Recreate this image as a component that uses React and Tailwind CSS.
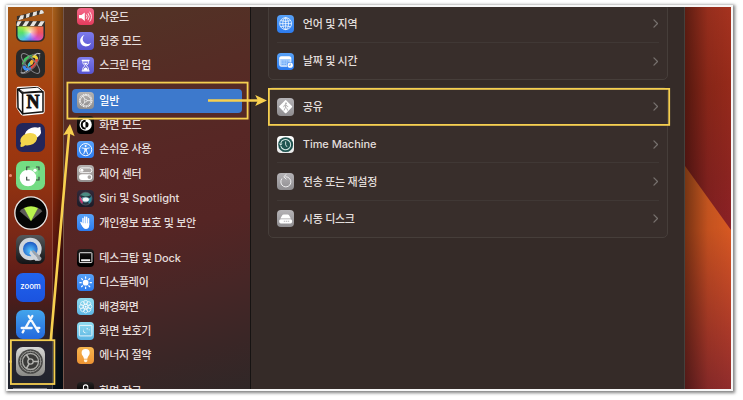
import React from "react";

const TICKS = [0, 45, 90, 135, 180, 225, 270, 315];
const TEETH = Array.from({ length: 24 }, (_, i) => i * 15);

const icons = {
  sound: (
    <>
      <path d="M6 21h7l10-8v25l-10-8H6z" fill="#fff" />
      <path
        d="M28 20q4 5.500 0 11M33 16q7 9.500 0 19M38 12q10 13.500 0 27"
        fill="none"
        stroke="#fff"
        strokeWidth="2.500"
        strokeLinecap="round"
      />
    </>
  ),
  focus: (
    <path d="M22 9a17 17 0 1 0 20 23A15 15 0 0 1 22 9z" fill="#fff" />
  ),
  screenTime: (
    <>
      <path d="M14 8h23v4H14zM14 39h23v4H14z" fill="#fff" />
      <path
        d="M17 12v4q0 5 7 9.500-7 4.500-7 9.500v4h17v-4q0-5-7-9.500 7-4.500 7-9.500v-4z"
        fill="none"
        stroke="#fff"
        strokeWidth="2.500"
      />
      <path d="M20 17h11l-5.500 7zM19 38q1-6 6.500-8 5.500 2 6.500 8z" fill="#fff" />
    </>
  ),
  general: (
    <g fill="none" stroke="#fff">
      <circle cx="25.500" cy="25.500" r="18.500" strokeWidth="3" strokeDasharray="2.900 1.940" />
      <circle cx="25.500" cy="25.500" r="15.500" strokeWidth="2" />
      <circle cx="25.500" cy="25.500" r="4" strokeWidth="2" />
      <path d="M29.500 25.500H40M23.500 22l-6-10M23.500 29l-6 10" strokeWidth="2.200" />
    </g>
  ),
  appearance: (
    <>
      <circle cx="25.500" cy="25.500" r="18" fill="#fff" />
      <path d="M25.500 11a14.500 14.500 0 0 0 0 29z" fill="#050505" />
      <path d="M25.500 17a8.500 8.500 0 0 0 0 17z" fill="#fff" />
      <path d="M25.500 17a8.500 8.500 0 0 1 0 17z" fill="#050505" />
    </>
  ),
  accessibility: (
    <>
      <circle cx="25.500" cy="25.500" r="18" fill="none" stroke="#fff" strokeWidth="2.800" />
      <circle cx="25.500" cy="15" r="3" fill="#fff" />
      <path
        d="M15 20.500l8 1.500v7l-3 9M36 20.500l-8 1.500v7l3 9M25.500 21v9"
        fill="none"
        stroke="#fff"
        strokeWidth="2.800"
        strokeLinecap="round"
      />
    </>
  ),
  controlCenter: (
    <>
      <rect x="7" y="8.500" width="37" height="14" rx="7" fill="none" stroke="#fff" strokeWidth="2.600" />
      <circle cx="14.500" cy="15.500" r="4.500" fill="#fff" />
      <rect x="6" y="27" width="39" height="17" rx="8.500" fill="#fff" />
      <circle cx="36.500" cy="35.500" r="5.500" fill="#a9a6a5" />
    </>
  ),
  siri: (
    <>
      <circle cx="25.500" cy="25.500" r="19" fill="#23343f" />
      <path d="M10 15a19 19 0 0 1 31 0q-13 8-31 0z" fill="#4b8b83" />
      <path d="M8 18q-4 15 8 23 5-12-8-23z" fill="#c9366f" />
      <path d="M43 18q3 16-8 23-6-10 8-23z" fill="#2b8796" />
      <path d="M12 24q12-9 27 1-6 13-15 12-8-1-12-13z" fill="#71b7c2" opacity=".75" />
      <ellipse cx="26" cy="28" rx="9" ry="6" fill="#f3f8fb" />
      <circle cx="25.500" cy="25.500" r="19" fill="none" stroke="#6a6f78" strokeWidth="1.500" />
    </>
  ),
  privacy: (
    <>
      <g stroke="#fff" strokeWidth="4.200" strokeLinecap="round" fill="none">
        <path d="M17.500 13v18M23 9v20M28.500 9.500V30M34 14v18" />
        <path d="M11.500 25l6 10" />
      </g>
      <path d="M15.500 27H36v6q0 11-10 11-6 0-9-6-3-4-5-9z" fill="#fff" />
    </>
  ),
  desktop: (
    <>
      <rect x="7" y="11" width="37" height="29" rx="2" fill="none" stroke="#f4f4f4" strokeWidth="2.800" />
      <rect x="12" y="30" width="27" height="6" rx="1" fill="#f4f4f4" />
    </>
  ),
  display: (
    <>
      <circle cx="25.500" cy="25.500" r="8.500" fill="#fff" />
      {TICKS.map((a) => (
        <path
          key={a}
          d="M25.500 12.500v-4"
          stroke="#fff"
          strokeWidth="3.400"
          strokeLinecap="round"
          transform={`rotate(${a} 25.500 25.500)`}
        />
      ))}
    </>
  ),
  wallpaper: (
    <>
      {TICKS.map((a) => (
        <circle
          key={a}
          cx="25.500"
          cy="13"
          r="6"
          fill="none"
          stroke="#fff"
          strokeWidth="2"
          transform={`rotate(${a} 25.500 25.500)`}
        />
      ))}
      <circle cx="25.500" cy="25.500" r="7" fill="none" stroke="#fff" strokeWidth="2" />
      <circle cx="25.500" cy="25.500" r="3" fill="#fff" />
    </>
  ),
  screenSaver: (
    <>
      <rect x="7" y="10" width="37" height="31" rx="2" fill="none" stroke="#fff" strokeWidth="2.400" />
      <path d="M22 18a8 8 0 1 0 10 12 7.500 7.500 0 0 1-10-12z" fill="#fff" />
      <circle cx="30" cy="20" r="2" fill="#fff" />
      <circle cx="36" cy="23" r="1.500" fill="#fff" />
    </>
  ),
  energy: (
    <>
      <path d="M25.500 6a12 12 0 0 0-12 12c0 7 6 9 7 17h10c1-8 7-10 7-17a12 12 0 0 0-12-12z" fill="#fff" />
      <path d="M20.500 37h10v4q-2 4-5 4t-5-4z" fill="#fff3dc" />
    </>
  ),
  lock: (
    <>
      <rect x="15" y="20" width="21" height="18" rx="3" fill="#fff" />
      <path d="M19 21v-6a6.500 6.500 0 0 1 13 0v6" fill="none" stroke="#fff" strokeWidth="3" />
    </>
  ),
  globe: (
    <g fill="none" stroke="#fff" strokeWidth="2.200">
      <circle cx="25.500" cy="25.500" r="17.500" />
      <ellipse cx="25.500" cy="25.500" rx="8.500" ry="17.500" />
      <path d="M25.500 8v35M8 25.500h35M11 16.500q14.500 5 29 0M11 34.500q14.500-5 29 0" />
    </g>
  ),
  date: (
    <>
      <rect x="8" y="11" width="33" height="28" rx="4" fill="#a9cffd" stroke="#fff" strokeWidth="2.500" />
      <path d="M8 18v-3q0-4 4-4h25q4 0 4 4v3z" fill="#fff" />
      <path d="M14 24h21M14 29h18M14 34h14" stroke="#4d96f5" strokeWidth="2.200" strokeDasharray="3 2" />
      <circle cx="39" cy="36" r="9.500" fill="#3a86f0" />
      <circle cx="39" cy="36" r="7.800" fill="#fff" />
      <path d="M39 31v5.500h-4" fill="none" stroke="#3a86f0" strokeWidth="1.800" />
    </>
  ),
  sharing: (
    <>
      <rect x="11" y="11" width="29" height="29" rx="3" fill="#fff" transform="rotate(45 25.500 25.500)" />
      <circle cx="26.500" cy="15.500" r="2.200" fill="#8b898b" />
      <path
        d="M26 20l-1 8-4 8M25.500 27l4 4 1.500 5M20 26l1.500-4.500 4.500-1.500 3 4 3 1"
        fill="none"
        stroke="#8b898b"
        strokeWidth="1.800"
        strokeLinecap="round"
        strokeLinejoin="round"
      />
    </>
  ),
  timeMachine: (
    <>
      <circle cx="25.500" cy="25.500" r="22" fill="#1f5450" />
      <path d="M11 30a15 15 0 1 0 0-9" fill="none" stroke="#d7e9e6" strokeWidth="3" />
      <path d="M5.500 22h11l-5.500 7z" fill="#d7e9e6" />
      <path d="M25.500 16v10l4 6" fill="none" stroke="#e9f4f2" strokeWidth="2.600" />
    </>
  ),
  reset: (
    <>
      <path d="M14 17a15 15 0 1 0 12-6" fill="none" stroke="#f3f2f3" strokeWidth="2.800" strokeLinecap="round" />
      <path
        d="M27 4.500l-7 6.500 7 7"
        fill="none"
        stroke="#f3f2f3"
        strokeWidth="2.800"
        strokeLinecap="round"
        strokeLinejoin="round"
      />
    </>
  ),
  disk: (
    <>
      <path d="M10 25l5-9q1.500-3 5-3h11q3.500 0 5 3l5 9z" fill="#fff" />
      <rect x="6.500" y="27" width="38" height="12.500" rx="5" fill="#fff" />
      <path d="M20 33h16" stroke="#b4b2b5" strokeWidth="3" strokeDasharray="4 2" />
    </>
  ),
};

const tones = {
  sound: "from-[#f4688a] to-[#e33b5d]",
  focus: "from-[#7e7bec] to-[#5854d0]",
  screenTime: "from-[#7e7bec] to-[#5854d0]",
  general: "from-[#b5b3b2] to-[#8f8d8d]",
  appearance: "from-[#1c1c1c] to-[#000000]",
  accessibility: "from-[#58a2f8] to-[#2c7bee]",
  controlCenter: "from-[#b5b1b0] to-[#918d8c]",
  siri: "from-[#33293a] to-[#1b1c27]",
  privacy: "from-[#58a2f8] to-[#2c7bee]",
  desktop: "from-[#222020] to-[#000000]",
  display: "from-[#58a2f8] to-[#2c7bee]",
  wallpaper: "from-[#8fdcef] to-[#5cb5e3]",
  screenSaver: "from-[#8fdcef] to-[#5cb5e3]",
  energy: "from-[#f6b54e] to-[#ed9333]",
  lock: "from-[#282424] to-[#000000]",
  globe: "from-[#58a2f8] to-[#2c7bee]",
  date: "from-[#58a2f8] to-[#2c7bee]",
  sharing: "from-[#b5b3b6] to-[#8f8d90]",
  timeMachine: "from-[#ffffff] to-[#e9e9e9]",
  reset: "from-[#b5b3b6] to-[#8f8d90]",
  disk: "from-[#b5b3b6] to-[#8f8d90]",
};

const sidebar = [
  [
    { id: "sound", label: "사운드" },
    { id: "focus", label: "집중 모드" },
    { id: "screenTime", label: "스크린 타임" },
  ],
  [
    { id: "general", label: "일반", active: true },
    { id: "appearance", label: "화면 모드" },
    { id: "accessibility", label: "손쉬운 사용" },
    { id: "controlCenter", label: "제어 센터" },
    { id: "siri", label: "Siri 및 Spotlight", tracking: "tracking-normal" },
    { id: "privacy", label: "개인정보 보호 및 보안" },
  ],
  [
    { id: "desktop", label: "데스크탑 및 Dock", tracking: "tracking-[-0.2px]" },
    { id: "display", label: "디스플레이" },
    { id: "wallpaper", label: "배경화면" },
    { id: "screenSaver", label: "화면 보호기" },
    { id: "energy", label: "에너지 절약" },
  ],
  [{ id: "lock", label: "화면 잠금" }],
];

const regionRows = [
  { id: "globe", label: "언어 및 지역" },
  { id: "date", label: "날짜 및 시간" },
];

const systemRows = [
  { id: "sharing", label: "공유" },
  { id: "timeMachine", label: "Time Machine", tracking: "tracking-[-0.05px]" },
  { id: "reset", label: "전송 또는 재설정" },
  { id: "disk", label: "시동 디스크" },
];

function SettingIcon({ id }) {
  return (
    <span className={`block size-[17.300px] shrink-0 overflow-hidden rounded-[4px] bg-linear-to-b ${tones[id]}`}>
      <svg viewBox="0 0 51 51" className="block size-full">
        {icons[id]}
      </svg>
    </span>
  );
}

function SidebarItem({ id, label, active, tracking = "tracking-[-0.28px]" }) {
  return (
    <div
      className={`flex h-[24.350px] shrink-0 items-center gap-[5px] rounded-[4px] pl-[5px] whitespace-nowrap ${
        active ? "bg-[#3d79cc] text-white" : "text-[#e6dddb]"
      }`}
    >
      <SettingIcon id={id} />
      <span className={`pt-px ${tracking}`}>{label}</span>
    </div>
  );
}

function Row({ id, label, divided, tracking = "tracking-[-0.28px]" }) {
  return (
    <div
      className={`mx-2 flex h-[37.300px] shrink-0 items-center border-t ${
        divided ? "border-[#403835]" : "border-transparent"
      }`}
    >
      <SettingIcon id={id} />
      <span className={`ml-[8.500px] pt-px text-[#e3dedc] ${tracking}`}>{label}</span>
      <svg viewBox="0 0 6 10" className="mr-px ml-auto h-[9px] w-[5.500px]">
        <path
          d="M1 1l4 4-4 4"
          fill="none"
          stroke="#77716e"
          strokeWidth="1.400"
          strokeLinecap="round"
          strokeLinejoin="round"
        />
      </svg>
    </div>
  );
}

function FinalCut() {
  return (
    <svg viewBox="0 0 87 96" className="h-8 w-[29px]">
      <defs>
        <clipPath id="fc-body">
          <path d="M2 38h83v38q0 18-18 18H20Q2 94 2 76z" />
        </clipPath>
        <clipPath id="fc-top">
          <path d="M2 19L76 0q6 0 8 10L2 32z" />
        </clipPath>
      </defs>
      <path d="M0 34h87v42q0 20-20 20H20Q0 96 0 76z" fill="#2d2b2b" />
      <g clipPath="url(#fc-top)">
        <path d="M0 0h87v34H0z" fill="#38332f" />
        <path d="M6 32l8-16h10l-3 12zM30 24l1-13 11-3-3 14zM49 20l3-14 11-3-1 13zM69 14l4-14h12v11z" fill="#e7e4df" />
      </g>
      <path d="M0 34h87v15H0z" fill="#35312e" />
      <path d="M5 34h12l-9 14H2v-6zM28 34h12l-9 14H19zM51 34h12l-9 14H42zM74 34h12l-9 14H65z" fill="#e7e4df" />
      <g clipPath="url(#fc-body)">
        <foreignObject x="4" y="49" width="79" height="43">
          <div className="size-full rounded-b-[16px] bg-[conic-gradient(from_0deg_at_50%_45%,#f0a83c,#f07a42,#ef5364,#d04fd0,#6d6df2,#4fc3e8,#55e06d,#c5e83e,#f0a83c)]">
            <div className="size-full bg-[radial-gradient(circle_at_50%_40%,rgba(255,255,255,.7),rgba(255,255,255,0)_50%)]" />
          </div>
        </foreignObject>
      </g>
    </svg>
  );
}

function Motion() {
  return (
    <svg viewBox="0 0 87 87" className="size-[29px]">
      <rect width="87" height="87" rx="20" fill="#292929" />
      <g fill="none" strokeWidth="9">
        <path d="M22 47Q25 25 50 21" stroke="#42c763" />
        <path d="M49 21q14 0 13 11" stroke="#f0d637" />
        <path d="M62 31q0 19-18 27" stroke="#ee473d" />
        <path d="M45 58q-20 9-21-8" stroke="#3b8cf4" />
      </g>
      <path d="M37 44l9-12 8 3-4 11-10 5z" fill="#f2b735" />
      <path d="M35 47l6-9 3 10-8 7z" fill="#3fc9da" />
      <g fill="none" strokeWidth="3">
        <ellipse cx="43.500" cy="43.500" rx="38" ry="14" stroke="#85868b" transform="rotate(48 43.500 43.500)" />
        <ellipse cx="43.500" cy="43.500" rx="38" ry="15" stroke="#65666c" transform="rotate(-48 43.500 43.500)" />
        <path d="M14 71q6 4 22-7M73 14q-8-4-19 5" stroke="#c2c4c9" strokeWidth="3" />
      </g>
    </svg>
  );
}

function Notion() {
  return (
    <svg viewBox="0 0 87 90" className="h-[30px] w-[29px]">
      <path d="M2 6q0-4 6-4L62 0q4 0 7 2l14 11q3 3 3 7v55q0 8-8 9l-55 5q-6 0-9-4L4 70q-3-4-3-8z" fill="#fff" />
      <path d="M7 8l54-4q4 0 7 2l11 9-54 4q-4 0-6-2z" fill="#fff" stroke="#111" strokeWidth="3" />
      <path d="M5 9l15 14v60L6 66z" fill="#fff" stroke="#111" strokeWidth="4.500" strokeLinejoin="round" />
      <path d="M20 21l61-4v60l-61 6z" fill="#fff" stroke="#111" strokeWidth="4.500" strokeLinejoin="round" />
      <text
        x="51"
        y="67"
        textAnchor="middle"
        fontFamily="Liberation Serif, serif"
        fontWeight="700"
        fontSize="54"
        fill="#111"
        stroke="#111"
        strokeWidth="2.500"
      >
        N
      </text>
    </svg>
  );
}

function LemonApp() {
  return (
    <svg viewBox="0 0 87 87" className="size-[29px]">
      <rect width="87" height="87" rx="20" fill="#23265a" />
      <ellipse cx="51" cy="31" rx="25" ry="17" fill="#fff" transform="rotate(-20 51 31)" />
      <path d="M62 18q6-7 11-6 2 6-1 13z" fill="#fff" />
      <ellipse cx="38" cy="49" rx="26" ry="18" fill="#f3d64c" transform="rotate(-16 38 49)" />
      <path d="M17 56q-5 9-3 16 8 1 15-7z" fill="#f3d64c" />
    </svg>
  );
}

function Capture() {
  return (
    <svg viewBox="0 0 87 87" className="size-[29px]">
      <rect width="87" height="87" rx="20" fill="#74dc83" />
      <circle cx="52" cy="34" r="15" fill="#88e194" />
      <circle cx="36" cy="51" r="25" fill="#fff" />
      <circle cx="57" cy="28" r="5" fill="#fff" />
      <path
        d="M32 28V18h9M60 18h9v10M69 47v10h-9M41 57h-9V47"
        fill="none"
        stroke="#3c4741"
        strokeWidth="3.500"
      />
    </svg>
  );
}

function Radar() {
  return (
    <svg viewBox="0 0 102 102" className="size-[34px] shrink-0">
      <circle cx="51" cy="51" r="48.500" fill="#050505" stroke="#e8e4e2" strokeWidth="4" />
      <path d="M51 75L17 46q5-7 14-11z" fill="#5d5b59" />
      <path d="M51 75l34-29q-5-7-14-11z" fill="#5d5b59" />
      <path d="M51 76L30 36q21-11 42 0z" fill="#b9f34e" />
    </svg>
  );
}

function QuickTime() {
  return (
    <svg viewBox="0 0 87 87" className="size-[29px]">
      <defs>
        <linearGradient id="qt-bg" x2="0" y2="1">
          <stop stopColor="#55585b" />
          <stop offset="1" stopColor="#121315" />
        </linearGradient>
        <radialGradient id="qt-blue" cy=".6">
          <stop stopColor="#56c8ff" />
          <stop offset="1" stopColor="#1c56c2" />
        </radialGradient>
      </defs>
      <rect width="87" height="87" rx="20" fill="url(#qt-bg)" />
      <circle cx="43" cy="42" r="27" fill="url(#qt-blue)" />
      <circle cx="43" cy="42" r="28" fill="none" stroke="#d0d5db" strokeWidth="12" />
      <path d="M47 48q4-4 9 0l20 20q2 8-6 9z" fill="#9ea3aa" />
      <path d="M44 46l27 31H58L40 56z" fill="#d0d5db" />
    </svg>
  );
}

function Zoom() {
  return (
    <div className="flex size-[29px] items-center justify-center rounded-[7px] bg-linear-to-b from-[#2163ee] to-[#1b53df] font-['Inter',sans-serif] text-[7.800px] leading-none font-medium text-white">
      <span className="-mt-px">zoom</span>
    </div>
  );
}

function AppStore() {
  return (
    <svg viewBox="0 0 87 87" className="size-[29px]">
      <defs>
        <linearGradient id="as-bg" x2="0" y2="1">
          <stop stopColor="#43a5ec" />
          <stop offset="1" stopColor="#2368dd" />
        </linearGradient>
      </defs>
      <rect width="87" height="87" rx="20" fill="url(#as-bg)" />
      <g stroke="#f5f8fd" strokeWidth="7" strokeLinecap="round">
        <path d="M49 18L29 53M38 18l29 47M17 54h30M60 54h10M23 62l-3 5" />
      </g>
    </svg>
  );
}

function SystemSettings() {
  return (
    <svg viewBox="0 0 87 87" className="size-[29px]">
      <defs>
        <linearGradient id="ss-bg" x2="0" y2="1">
          <stop stopColor="#d8d8d5" />
          <stop offset="1" stopColor="#898985" />
        </linearGradient>
      </defs>
      <rect width="87" height="87" rx="20" fill="url(#ss-bg)" />
      <circle cx="43.500" cy="43.500" r="37" fill="#484846" />
      <circle cx="43.500" cy="43.500" r="31" fill="#3b3b39" stroke="#a7a7a3" strokeWidth="2.500" />
      {TEETH.map((a) => (
        <path key={a} d="M43.500 15.500v-5" stroke="#8f8f8b" strokeWidth="2.500" transform={`rotate(${a} 43.500 43.500)`} />
      ))}
      <circle cx="43.500" cy="43.500" r="24" fill="none" stroke="#aaaaa6" strokeWidth="4" />
      <circle cx="43.500" cy="43.500" r="8" fill="none" stroke="#b5b5b1" strokeWidth="4" />
      <path d="M51 43.500h17M39.500 36.500L31 22M39.500 50.500L31 65" stroke="#b5b5b1" strokeWidth="5" />
    </svg>
  );
}

const dock = [
  { app: FinalCut },
  { app: Motion },
  { app: Notion },
  { app: LemonApp },
  { app: Capture, dot: "bg-[#f08a70]" },
  { app: Radar },
  { app: QuickTime },
  { app: Zoom },
  { app: AppStore },
  { app: SystemSettings, dot: "bg-[#aaa5aa]" },
];

function Dock() {
  return (
    <div className="flex h-full w-[44.500px] shrink-0 flex-col items-center border-r border-white/15 bg-[linear-gradient(180deg,#a65a18_0%,#a64a12_15%,#a53b10_27%,#98350f_42%,#782817_60%,#5b1b18_72%,#32201f_84%,#272530_90%,#20242d_100%)] pt-[0.300px]">
      {dock.map(({ app: App, dot }, i) => (
        <div key={i} className="relative flex h-[37.330px] w-full shrink-0 items-center justify-center pl-[1.500px]">
          {dot && <span className={`absolute left-px size-[3px] rounded-full ${dot}`} />}
          <App />
        </div>
      ))}
      <div className="mt-[7px] h-px w-[34px] shrink-0 bg-white/40" />
    </div>
  );
}

function Annotations() {
  return (
    <svg viewBox="0 0 743 400" className="pointer-events-none absolute inset-0 h-[400px] w-[743px]">
      <g fill="none" stroke="#f5cf50" strokeWidth="1.800">
        <rect x="10.900" y="340.200" width="43.500" height="43.800" />
        <rect x="67.400" y="82.600" width="180.200" height="36" />
        <rect x="268.900" y="88.900" width="400.300" height="36" />
      </g>
      <g stroke="#f8d04f" strokeWidth="2.600" fill="none">
        <path d="M50.800 340L69 133M208 100.500h50" />
      </g>
      <g fill="#f8d04f">
        <path d="M70 124l4.700 12.300-5.500-2.700-6 1.700z" />
        <path d="M267 100.500l-11.800 5.600 2.700-5.600-2.700-5.600z" />
      </g>
    </svg>
  );
}

export default function App() {
  return (
    <div className="relative h-[400px] w-[743px] overflow-hidden bg-white p-[6px] pt-[5px] font-['Inter','Noto_Sans_CJK_KR',sans-serif] text-[11px] leading-none font-medium">
      <div className="h-[386px] w-[727px] border-2 border-[#f7f7f7] bg-white shadow-[1px_1px_3px_1px_rgba(0,0,0,.5)]">
        <div className="flex h-[382px] w-[723px] overflow-hidden bg-[#352c29]">
          <Dock />
          <div className="w-[10.500px] shrink-0 bg-[linear-gradient(90deg,transparent,rgba(0,0,0,.35)),linear-gradient(180deg,#a8601b_0%,#a84f12_15%,#9c3a0c_30%,#84290b_48%,#541310_65%,#32100f_80%,#08131b_92%,#061019_100%)]" />
          <div className="flex h-full w-[188px] shrink-0 flex-col border-r border-l border-r-[#161312] border-l-[#73564c] bg-[linear-gradient(165deg,#523426_0%,#552c25_22%,#572725_40%,#552524_58%,#472626_74%,#3a2626_88%,#302727_100%)]">
            <div className="-mt-[2.600px] flex flex-col gap-[11.200px] pr-[8.500px] pl-2">
              {sidebar.map((group, i) => (
                <div key={i}>
                  {group.map((item) => (
                    <SidebarItem key={item.id} {...item} />
                  ))}
                </div>
              ))}
            </div>
          </div>
          <div className="flex h-full w-[434px] shrink-0 flex-col border-r border-[#45403c] bg-[#352b28] pr-[16px] pl-[17px]">
            <div className="-mt-[3.300px] shrink-0 rounded-[5px] border border-[#463e3a] bg-[#382e2b]">
              {regionRows.map((row, i) => (
                <Row key={row.id} {...row} divided={i > 0} />
              ))}
            </div>
            <div className="mt-[6.500px] shrink-0 rounded-[5px] border border-[#463e3a] bg-[#382e2b]">
              {systemRows.map((row, i) => (
                <Row key={row.id} {...row} divided={i > 0} />
              ))}
            </div>
          </div>
          <div className="relative flex-1 bg-[linear-gradient(165deg,#a83420_0%,#962a1a_22%,#8c2420_45%,#8b2026_60%)]">
            <div className="size-full bg-[linear-gradient(170deg,#d86223_42%,#d85a22_58%,#c44a25_70%,#a93829_86%,#902c2c_100%)] [clip-path:polygon(0_159px,100%_223px,100%_100%,0_100%)]" />
            <div className="absolute inset-0 bg-linear-to-r from-black/45 via-black/10 to-transparent" />
          </div>
        </div>
      </div>
      <Annotations />
    </div>
  );
}
